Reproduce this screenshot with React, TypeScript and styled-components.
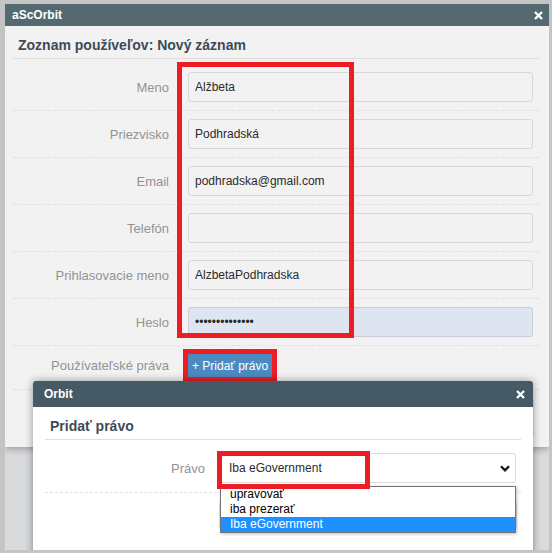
import React from "react";
import styled, { createGlobalStyle } from "styled-components";

const GlobalStyle = createGlobalStyle`
  html, body {
    margin: 0;
    padding: 0;
    background: #c4c4c4;
    font-family: "Liberation Sans", Arial, sans-serif;
  }
  * {
    box-sizing: border-box;
  }
`;

const Frame = styled.div`
  height: 553px;
  padding: 4px 3px 3px 5px;
`;

const Screen = styled.div`
  position: relative;
  height: 546px;
  background: #d9dadc;
  overflow: hidden;
`;

const Window = styled.div`
  height: 443px;
  background: #f2f2f2;
  box-shadow: 0 2px 7px rgba(0, 0, 0, 0.3);
  display: flex;
  flex-direction: column;
`;

const TitleBar = styled.div<{ $dialog?: boolean }>`
  display: flex;
  align-items: center;
  justify-content: space-between;
  height: ${(p) => (p.$dialog ? "26px" : "22px")};
  padding: ${(p) => (p.$dialog ? "0 8px 0 11px" : "0 6px 0 7px")};
  background: ${(p) => (p.$dialog ? "#465a66" : "#546970")};
  border-radius: ${(p) => (p.$dialog ? "3px 3px 0 0" : "0")};
  color: #fff;
  font-size: 12px;
  font-weight: bold;
`;

const CloseIcon = () => (
  <svg width="9" height="9" viewBox="0 0 9 9">
    <path d="M1 1 L8 8 M8 1 L1 8" stroke="#fff" strokeWidth="2.4" />
  </svg>
);

const Body = styled.div<{ $dialog?: boolean }>`
  padding: ${(p) => (p.$dialog ? "0 12px" : "0 10px 0 8px")};
`;

const Heading = styled.div`
  display: flex;
  align-items: center;
  height: 33px;
  padding: 5px 0 0 5px;
  border-bottom: 1px solid #dedede;
  color: #3d4a57;
  font-size: 14px;
  font-weight: bold;
`;

const Form = styled.div`
  padding-top: 5px;
`;

const Row = styled.div<{ $label: number; $gap: number; $pr?: number; $pb?: number }>`
  display: grid;
  grid-template-columns: ${(p) => p.$label}px 1fr;
  column-gap: ${(p) => p.$gap}px;
  align-items: center;
  padding: 8px ${(p) => p.$pr ?? 6}px ${(p) => p.$pb ?? 8}px 0;
  border-bottom: 1px dashed #e1e1e1;
`;

const PlainRow = styled(Row)`
  border-bottom: none;
`;

const Label = styled.div`
  text-align: right;
  color: #929292;
  font-size: 13px;
`;

const Input = styled.input<{ $filled?: boolean }>`
  height: 30px;
  width: 100%;
  padding: 0 6px;
  border: 1px solid ${(p) => (p.$filled ? "#c6cedb" : "#d8d8d8")};
  border-radius: 3px;
  background: ${(p) => (p.$filled ? "#dfe5f0" : "#f2f2f2")};
  color: #2b2b2b;
  font-family: "Liberation Sans", Arial, sans-serif;
  font-size: 12px;
  outline: none;
`;

const AddButton = styled.button<{ $marked?: boolean }>`
  justify-self: start;
  height: 23px;
  padding: 0 4px;
  border: none;
  border-radius: 0;
  background: #4b8bc1;
  color: #fff;
  font-family: "Liberation Sans", Arial, sans-serif;
  font-size: 12px;
  outline: ${(p) => (p.$marked ? "5px solid #ee1c25" : "none")};
`;

const ListBox = styled.div<{ $h: number; $muted?: boolean }>`
  height: ${(p) => p.$h}px;
  border: 1px solid #dedede;
  border-radius: 3px;
  background: ${(p) => (p.$muted ? "#f6f6f6" : "transparent")};
`;

const Dialog = styled.div`
  position: absolute;
  left: 28px;
  top: 377px;
  width: 500px;
  bottom: -10px;
  background: #fff;
  border-radius: 3px 3px 0 0;
  box-shadow: 0 0 8px rgba(0, 0, 0, 0.4);
`;

const SelectWrap = styled.div`
  position: relative;
`;

const SelectBox = styled.div`
  display: flex;
  align-items: center;
  justify-content: space-between;
  height: 30px;
  padding: 0 5px 0 9px;
  border: 1px solid #dcdcdc;
  border-radius: 3px;
  background: #fff;
  color: #2b2b2b;
  font-size: 12px;
`;

const Chevron = () => (
  <svg width="10" height="7" viewBox="0 0 10 7">
    <polyline points="1,1.3 5,5.3 9,1.3" fill="none" stroke="#111" strokeWidth="2.3" />
  </svg>
);

const OptionList = styled.ul`
  position: absolute;
  left: 1px;
  right: 0;
  top: calc(100% + 3px);
  margin: 0;
  padding: 0;
  list-style: none;
  background: #fff;
  border: 1px solid #767676;
  box-shadow: 1px 1px 3px rgba(0, 0, 0, 0.25);
  z-index: 2;
`;

const Option = styled.li<{ $active?: boolean }>`
  height: 15px;
  line-height: 15px;
  padding-left: 9px;
  font-size: 12px;
  color: ${(p) => (p.$active ? "#fff" : "#000")};
  background: ${(p) => (p.$active ? "#1e90ff" : "transparent")};
`;

const Mark = styled.div<{ $x: number; $y: number; $w: number; $h: number }>`
  position: absolute;
  left: ${(p) => p.$x}px;
  top: ${(p) => p.$y}px;
  width: ${(p) => p.$w}px;
  height: ${(p) => p.$h}px;
  border: 5px solid #ee1c25;
  pointer-events: none;
  z-index: 5;
`;

const fields = [
  { label: "Meno", value: "Alžbeta" },
  { label: "Priezvisko", value: "Podhradská" },
  { label: "Email", value: "podhradska@gmail.com" },
  { label: "Telefón", value: "" },
  { label: "Prihlasovacie meno", value: "AlzbetaPodhradska" },
];

const options = ["upravovať", "iba prezerať", "Iba eGovernment"];

const App = () => {
  return (
    <Frame>
      <GlobalStyle />
      <Screen>
        <Window>
          <TitleBar>
            <span>aScOrbit</span>
            <CloseIcon />
          </TitleBar>
          <Body>
            <Heading>Zoznam používeľov: Nový záznam</Heading>
            <Form>
              {fields.map((f) => (
                <Row key={f.label} $label={156} $gap={19}>
                  <Label>{f.label}</Label>
                  <Input defaultValue={f.value} readOnly />
                </Row>
              ))}
              <Row $label={156} $gap={19}>
                <Label>Heslo</Label>
                <Input type="password" defaultValue="abcdefghijklmn" $filled readOnly />
              </Row>
              <Row $label={156} $gap={19} $pb={12}>
                <Label>Používateľské práva</Label>
                <AddButton $marked>+ Pridať právo</AddButton>
              </Row>
              <PlainRow $label={156} $gap={19} $pr={5}>
                <span />
                <ListBox $h={40} />
              </PlainRow>
            </Form>
          </Body>
        </Window>

        <Dialog>
          <TitleBar $dialog>
            <span>Orbit</span>
            <CloseIcon />
          </TitleBar>
          <Body $dialog>
            <Heading>Pridať právo</Heading>
            <Form>
              <Row $label={160} $gap={14} $pr={5} $pb={9}>
                <Label>Právo</Label>
                <SelectWrap>
                  <SelectBox>
                    <span>Iba eGovernment</span>
                    <Chevron />
                  </SelectBox>
                  <OptionList>
                    {options.map((o) => (
                      <Option key={o} $active={o === "Iba eGovernment"}>
                        {o}
                      </Option>
                    ))}
                  </OptionList>
                </SelectWrap>
              </Row>
              <PlainRow $label={160} $gap={14} $pr={4} $pb={8}>
                <span />
                <ListBox $h={28} $muted />
              </PlainRow>
            </Form>
          </Body>
        </Dialog>

        <Mark $x={172} $y={58} $w={177} $h={276} />
        <Mark $x={212} $y={447} $w={153} $h={38} />
      </Screen>
    </Frame>
  );
};

export default App;
